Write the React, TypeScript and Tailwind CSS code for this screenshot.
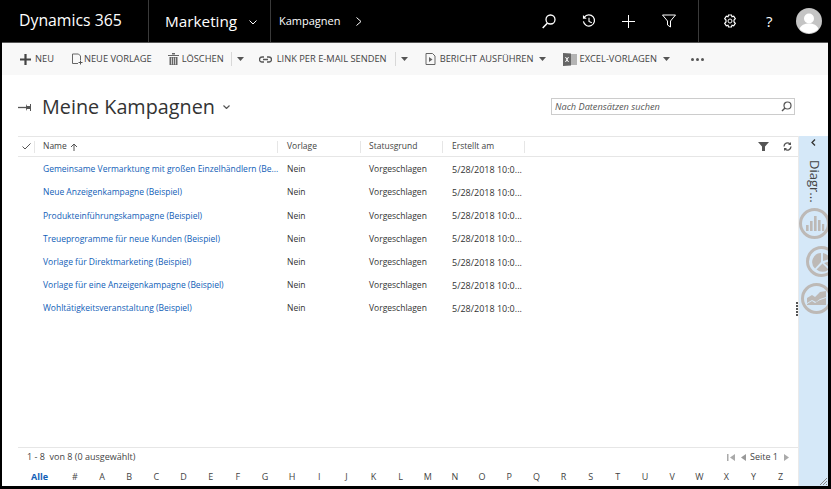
import React from "react";

const names = [
  "Gemeinsame Vermarktung mit großen Einzelhändlern (Be...",
  "Neue Anzeigenkampagne (Beispiel)",
  "Produkteinführungskampagne (Beispiel)",
  "Treueprogramme für neue Kunden (Beispiel)",
  "Vorlage für Direktmarketing (Beispiel)",
  "Vorlage für eine Anzeigenkampagne (Beispiel)",
  "Wohltätigkeitsveranstaltung (Beispiel)",
];
const letters = "# A B C D E F G H I J K L M N O P Q R S T U V W X Y Z".split(" ");

function Caret() {
  return <svg width="7" height="4" viewBox="0 0 7 4" className="shrink-0"><path d="M0 0h7L3.500 4z" fill="#555" /></svg>;
}
function Sep() {
  return <span className="block h-[14px] w-px bg-[#d8d8d8]" />;
}
function ChartCircle({ kind, className }: { kind: "bar" | "pie" | "line"; className: string }) {
  return (
    <svg width="31" height="31" viewBox="0 0 31 31" className={className}>
      <circle cx="15.500" cy="15.500" r="14" fill="none" stroke="#bdb9b6" strokeWidth="3" />
      {kind === "bar" && <path d="M7 17h2.600v6H7zM11 13h2.600v10H11zM15 8h2.600v15H15zM19 12h2.600v11H19zM23 16h2.200v7H23z" fill="#bdb9b6" />}
      {kind === "pie" && <path d="M15 7a9 9 0 0 0-6 15.500L15 16zM17 7v8l7-2a9 9 0 0 0-7-6zM25 15l-7 2 6 5a9 9 0 0 0 1-7zM10.500 23.500l6-6 6 6a9 9 0 0 1-12 0z" fill="#bdb9b6" />}
      {kind === "line" && <path d="M6 15l5-3 3 2 5-5 6-1v6l-6 2-4 3-4-2-5 3zM6 21l5-3 3 2 5-3 6-2v7H6z" fill="#bdb9b6" />}
    </svg>
  );
}

export default function App() {
  return (
    <div className="flex h-[489px] w-[831px] flex-col overflow-hidden bg-black pb-[3px] pl-[2px] pr-[3px] text-[#333] [font-family:'Open_Sans','Noto_Sans',sans-serif]">
      <header className="flex h-[42px] shrink-0 items-center bg-black text-white">
        <div className="flex h-full w-[146px] items-center pb-px pl-[17px] text-[15.8px]">Dynamics 365</div>
        <div className="flex h-full w-[122px] items-center border-l border-[#3a3a3a] pl-[16px]">
          <span className="text-[15.300px]">Marketing</span>
          <svg width="8" height="5" viewBox="0 0 8 5" className="ml-[12px] mt-[3px]"><path d="M0.500 0.500L4 4l3.500-3.500" fill="none" stroke="#fff" /></svg>
        </div>
        <div className="flex h-full flex-1 items-center border-l border-[#3a3a3a] pl-[8px]">
          <span className="text-[11px]">Kampagnen</span>
          <svg width="6" height="9" viewBox="0 0 6 9" className="ml-[15px]"><path d="M0.500 0.500l4.500 4-4.500 4" fill="none" stroke="#fff" /></svg>
        </div>
        <div className="flex h-full items-center">
          <svg width="14" height="15" viewBox="0 0 14 15" className="mr-[26px]"><circle cx="8.500" cy="5.500" r="4.500" fill="none" stroke="#fff" strokeWidth="1.300" /><path d="M5.500 9L.7 14" stroke="#fff" strokeWidth="1.500" /></svg>
          <svg width="14" height="14" viewBox="0 0 15 15" className="mr-[26px]"><path d="M2.500 3.500A6 6 0 1 1 1.500 8" fill="none" stroke="#fff" strokeWidth="1.300" /><path d="M1 1v4h4" fill="#fff" /><path d="M7.500 4v4l3 1.500" fill="none" stroke="#fff" strokeWidth="1.200" /></svg>
          <svg width="13" height="13" viewBox="0 0 13 13" className="mr-[27px]"><path d="M6.500 0v13M0 6.500h13" stroke="#fff" /></svg>
          <svg width="14" height="14" viewBox="0 0 14 14" className="mr-[22px]"><path d="M0.500 1h13L8.500 7v6l-3-2V7z" fill="none" stroke="#fff" /></svg>
        </div>
        <div className="flex h-full w-[130px] items-center border-l border-[#3a3a3a]">
          <svg width="14" height="14" viewBox="0 0 14 14" className="ml-[24px]"><path d="M5.500 1h3l.5 1.800 1.700-.6 1.600 2.500-1.300 1.300v2l1.300 1.300-1.600 2.500-1.700-.6-.5 1.800h-3L5 11.200l-1.700.6-1.600-2.500L3 8V6L1.700 4.700l1.600-2.500 1.700.6z" fill="none" stroke="#fff" strokeWidth="1.200" /><circle cx="7" cy="7" r="2" fill="none" stroke="#fff" /></svg>
          <span className="ml-[29px] w-[8px] text-[15px] leading-none">?</span>
          <svg width="26" height="26" viewBox="0 0 26 26" className="ml-[22px]"><circle cx="13" cy="13" r="13" fill="#c4c4c4" /><circle cx="13" cy="10.500" r="5" fill="#fff" /><path d="M3.500 21c1.500-4 5-5.500 9.500-5.500s8 1.500 9.500 5.500a13 13 0 0 1-19 0z" fill="#fff" /></svg>
        </div>
      </header>
      <div className="flex min-h-0 flex-1 flex-col border-t border-[#555] bg-white">
        <nav className="flex h-[32px] shrink-0 items-center bg-[#f8f8f8] pl-[18px] text-[9.300px] text-[#444]">
          <svg width="11" height="11" viewBox="0 0 11 11"><path d="M5.500 0v11M0 5.500h11" stroke="#444" strokeWidth="2.200" /></svg>
          <span className="ml-[4px]">NEU</span>
          <svg width="12" height="12" viewBox="0 0 12 12" className="ml-[17px]"><path d="M1.500 1h6l2 2v4M7 10.500H1.500V1" fill="none" stroke="#666" /><path d="M9.500 7.500v4M7.500 9.500h4" stroke="#555" /></svg>
          <span className="ml-[1px]">NEUE VORLAGE</span>
          <svg width="11" height="12" viewBox="0 0 11 12" className="ml-[16px]"><path d="M0 2h11v1H0zM4 0h3v1.500H4zM1.500 4h8v8h-8z" fill="#666" /><path d="M3.500 4.500v7M5.500 4.500v7M7.500 4.500v7" stroke="#f8f8f8" strokeWidth=".7" /></svg>
          <span className="ml-[3px]">LÖSCHEN</span>
          <span className="ml-[7px]"><Sep /></span>
          <span className="ml-[5px]"><Caret /></span>
          <svg width="13" height="7" viewBox="0 0 13 7" className="ml-[15px]"><path d="M5 1H3a2.500 2.500 0 0 0 0 5h2M8 1h2a2.500 2.500 0 0 1 0 5H8M4 3.500h5" fill="none" stroke="#555" strokeWidth="1.300" /></svg>
          <span className="ml-[5px]">LINK PER E-MAIL SENDEN</span>
          <span className="ml-[8px]"><Sep /></span>
          <span className="ml-[5px]"><Caret /></span>
          <svg width="11" height="12" viewBox="0 0 11 12" className="ml-[17px]"><path d="M1 .500h6.500l2.500 2.500v8.500H1z" fill="none" stroke="#666" /><path d="M4 4l3.500 2.500L4 9z" fill="#666" /></svg>
          <span className="ml-[4px]">BERICHT AUSFÜHREN</span>
          <span className="ml-[6px]"><Caret /></span>
          <svg width="14" height="13" viewBox="0 0 14 13" className="ml-[17px]"><path d="M5 1h9v11H5z" fill="#b4b4b4" /><path d="M0 0l8 .500v12L0 13z" fill="#666" /><path d="M2.500 4l3 5M5.500 4l-3 5" stroke="#fff" /></svg>
          <span className="ml-[2px]">EXCEL-VORLAGEN</span>
          <span className="ml-[6px]"><Caret /></span>
          <span className="ml-[21px] flex gap-[2px]">
            <i className="size-[3px] rounded-full bg-[#555]" /><i className="size-[3px] rounded-full bg-[#555]" /><i className="size-[3px] rounded-full bg-[#555]" />
          </span>
        </nav>
        <div className="flex min-h-0 flex-1">
          <main className="flex min-w-0 flex-1 flex-col pl-[16px]">
            <div className="flex h-[61px] shrink-0 items-center pt-[3px]">
              <svg width="13" height="7" viewBox="0 0 13 7" className="mt-[1px]"><path d="M0 3.500h8" stroke="#555" strokeWidth="1.300" /><path d="M8 0l1 2h3V0h1v7h-1V5H9L8 7z" fill="#555" /></svg>
              <h1 className="ml-[11px] text-[19.800px] font-normal text-[#333]">Meine Kampagnen</h1>
              <svg width="7" height="4" viewBox="0 0 7 4" className="ml-[8px]"><path d="M.5.500L3.500 3.500 6.500.500" fill="none" stroke="#555" strokeWidth="1.200" /></svg>
              <div className="ml-auto mr-[3px] -mt-[1px] flex h-[17px] w-[244px] items-center justify-between border border-[#ccc] pl-[3px] pr-[2px]">
                <span className="text-[9.200px] italic text-[#555]">Nach Datensätzen suchen</span>
                <svg width="11" height="11" viewBox="0 0 11 11"><circle cx="6.500" cy="4.500" r="3.500" fill="none" stroke="#555" strokeWidth="1.200" /><path d="M4 7L1 10" stroke="#555" strokeWidth="1.500" /></svg>
              </div>
            </div>
            <div className="flex min-h-0 flex-1 flex-col border-t border-[#e6e6e6]">
              <div className="flex h-[20px] shrink-0 items-center border-b border-[#e6e6e6] text-[8.500px] text-[#444]">
                <span className="flex w-[16px] justify-center">
                  <svg width="9" height="7" viewBox="0 0 9 7"><path d="M.5 3.500L3 6l5.500-5.500" fill="none" stroke="#555" /></svg>
                </span>
                <span className="h-[12px] w-px bg-[#e6e6e6]" />
                <span className="flex w-[242px] items-center pl-[8px]">
                  Name
                  <svg width="8" height="8" viewBox="0 0 8 8" className="ml-[3px]"><path d="M4 8V1M1 4l3-3 3 3" fill="none" stroke="#555" /></svg>
                </span>
                <span className="h-[12px] w-px bg-[#e6e6e6]" />
                <span className="w-[82px] pl-[9px]">Vorlage</span>
                <span className="h-[12px] w-px bg-[#e6e6e6]" />
                <span className="w-[81px] pl-[8px]">Statusgrund</span>
                <span className="h-[12px] w-px bg-[#e6e6e6]" />
                <span className="w-[81px] pl-[9px]">Erstellt am</span>
                <span className="h-[12px] w-px bg-[#e6e6e6]" />
                <span className="ml-auto flex items-center">
                  <svg width="11" height="9" viewBox="0 0 11 9"><path d="M0 0h11L7 4.500V9H4V4.500z" fill="#555" /></svg>
                  <svg width="9" height="9" viewBox="0 0 9 9" className="ml-[14px] mr-[6px]"><path d="M1 4.500A3.500 3.500 0 0 1 7 2M8 4.500A3.500 3.500 0 0 1 2 7" fill="none" stroke="#555" strokeWidth="1.300" /><path d="M8 0v3H5zM1 9V6h3z" fill="#555" /></svg>
                </span>
              </div>
              <div className="flex-1 pt-px">
                {names.map((n) => (
                  <div key={n} className="flex h-[23.200px] items-center whitespace-nowrap text-[8.500px] text-[#333]">
                    <span className="w-[269px] pl-[25px] text-[#1160b7]">{n}</span>
                    <span className="w-[82px]">Nein</span>
                    <span className="w-[83px]">Vorgeschlagen</span>
                    <span className="w-[82px] text-[9px]">5/28/2018 10:0...</span>
                  </div>
                ))}
              </div>
              <div className="relative shrink-0 border-t border-[#e6e6e6]">
                <div className="flex h-[18px] items-center justify-between pl-[9px] pr-[9px] text-[9px] text-[#444]">
                  <span>1 - 8 &nbsp;von 8 (0 ausgewählt)</span>
                  <span className="flex items-center">
                    <svg width="8" height="7" viewBox="0 0 8 7"><path d="M0 0h1.500v7H0zM8 0v7L3 3.500z" fill="#aaa" /></svg>
                    <svg width="5" height="7" viewBox="0 0 5 7" className="ml-[6px]"><path d="M5 0v7L0 3.500z" fill="#999" /></svg>
                    <span className="ml-[4px]">Seite 1</span>
                    <svg width="5" height="7" viewBox="0 0 5 7" className="ml-[6px]"><path d="M0 0v7l5-3.500z" fill="#aaa" /></svg>
                  </span>
                </div>
                <div className="flex h-[20px] items-center pt-[2px] text-[9px] text-[#444]">
                  <span className="w-[42px] pl-[13px] font-bold text-[#1160b7]">Alle</span>
                  <div className="flex flex-1 justify-between pl-[11px] pr-[13px]">
                    {letters.map((l) => <span key={l} className="w-[8px] text-center">{l}</span>)}
                  </div>
                </div>
              </div>
            </div>
          </main>
          <aside className="relative flex w-[30px] shrink-0 flex-col">
            <div className="h-[61px] shrink-0 bg-white" />
            <div className="flex flex-1 flex-col items-start overflow-hidden border-l border-[#eaeaea] bg-[#d5e8f8]">
              <svg width="5" height="7" viewBox="0 0 5 7" className="ml-[12px] mt-[3px] shrink-0"><path d="M4 .5L1 3.500l3 3" fill="none" stroke="#333" strokeWidth="1.300" /></svg>
              <span className="ml-[8px] mt-[14px] text-[13px] leading-[16px] text-[#444] [writing-mode:vertical-rl]">Diagr...</span>
              <ChartCircle kind="bar" className="mt-[5px] ml-0 shrink-0" />
              <ChartCircle kind="pie" className="ml-[7px] mt-[7px] shrink-0" />
              <ChartCircle kind="line" className="ml-[2px] mt-[6px] shrink-0" />
            </div>
            <span className="absolute left-[-2px] top-[227px] flex flex-col gap-px">
              {[0, 1, 2, 3, 4].map((i) => <i key={i} className="size-[2px] bg-[#555]" />)}
            </span>
            <svg width="9" height="9" viewBox="0 0 9 9" className="absolute bottom-0 right-0"><path d="M8 1L1 8M8 4L4 8M8 7L7 8" stroke="#888" /></svg>
          </aside>
        </div>
      </div>
    </div>
  );
}
